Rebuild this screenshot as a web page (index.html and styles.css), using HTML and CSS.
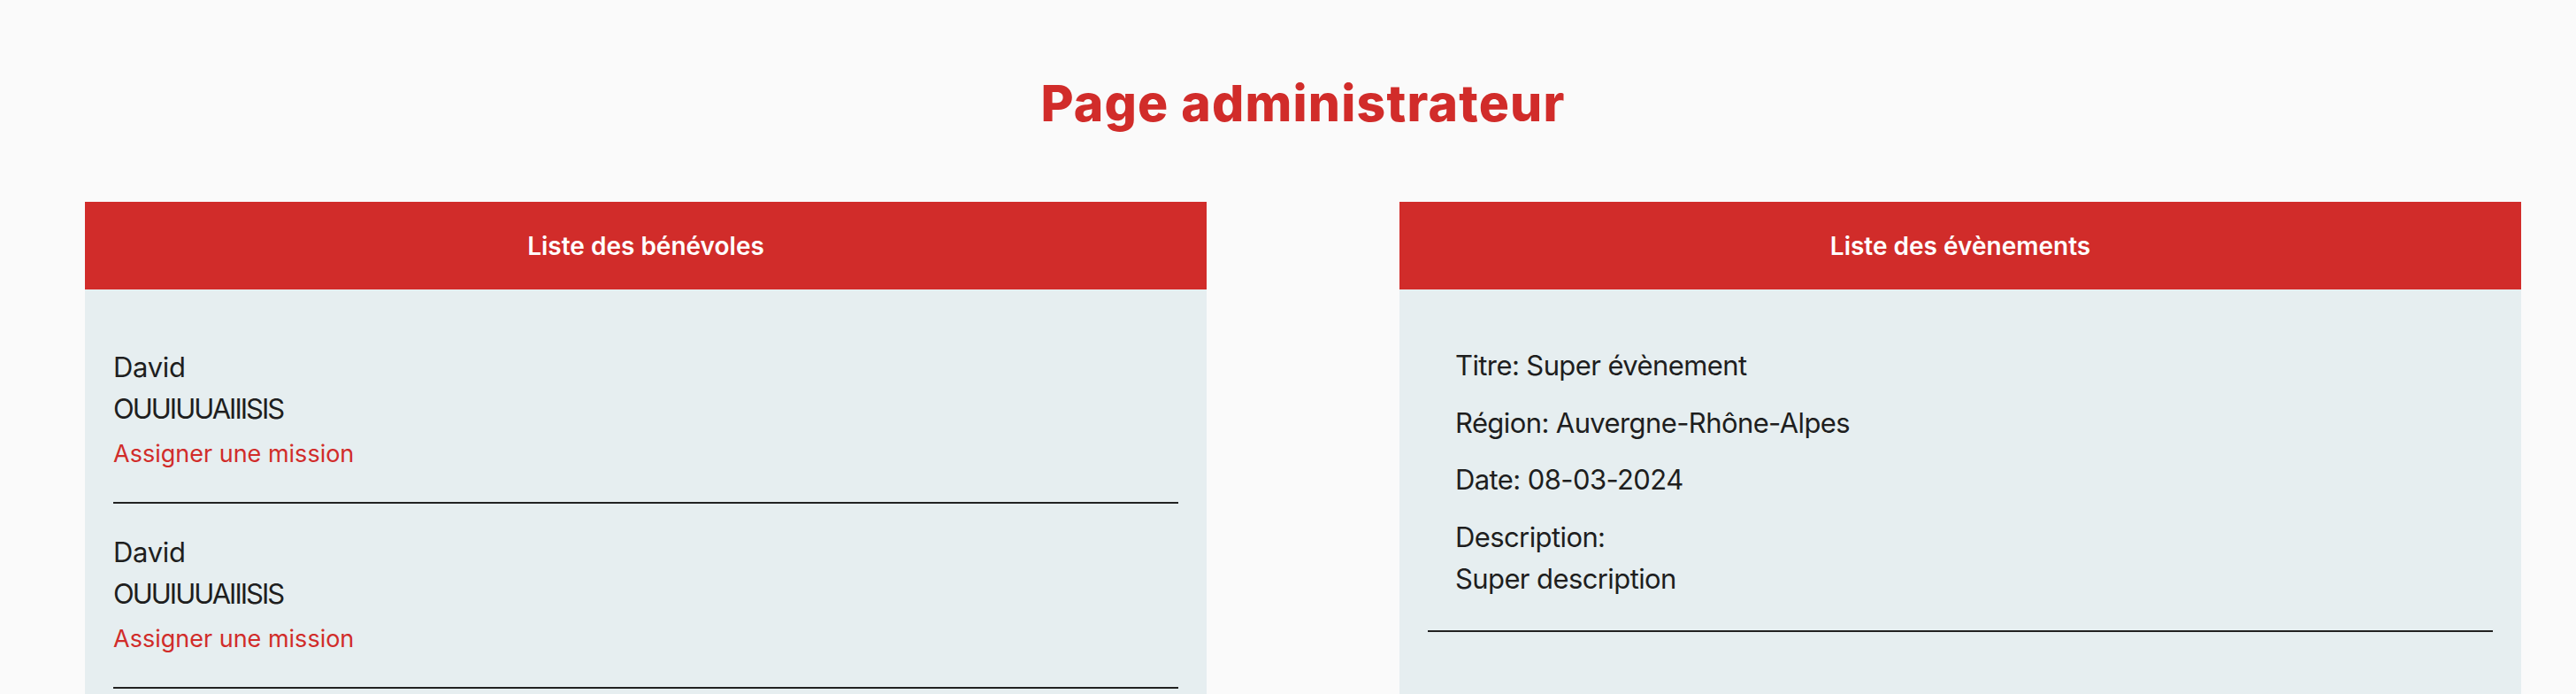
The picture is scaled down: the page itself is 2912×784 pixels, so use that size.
FILE: index.html
```html
<!DOCTYPE html>
<html lang="fr">
<head>
<meta charset="utf-8">
<title>Page administrateur</title>
<link rel="stylesheet" href="styles.css">
</head>
<body>
<main class="page">
  <h1 class="page-title">Page administrateur</h1>
  <div class="panels">
    <section class="panel">
      <header class="panel-head">Liste des bénévoles</header>
      <div class="panel-body">
        <div class="volunteer">
          <p class="line">David</p>
          <p class="line caps">OUUIUUAIIISIS</p>
          <a class="assign" href="#">Assigner une mission</a>
          <div class="divider"></div>
        </div>
        <div class="volunteer">
          <p class="line">David</p>
          <p class="line caps">OUUIUUAIIISIS</p>
          <a class="assign" href="#">Assigner une mission</a>
          <div class="divider"></div>
        </div>
      </div>
    </section>
    <section class="panel">
      <header class="panel-head">Liste des évènements</header>
      <div class="panel-body">
        <div class="event">
          <div class="event-info">
            <p class="field">Titre: Super évènement</p>
            <p class="field">Région: Auvergne-Rhône-Alpes</p>
            <p class="field">Date: 08-03-2024</p>
            <p class="field">Description:<br>Super description</p>
          </div>
          <div class="divider"></div>
        </div>
      </div>
    </section>
  </div>
</main>
</body>
</html>
```

FILE: styles.css
```css
html {
  overflow: hidden;
}

body {
  margin: 0;
  background: #fafafa;
  font-family: Inter, "Open Sans", sans-serif;
  color: #1e1e1e;
}

.page {
  padding: 0 62px 0 96px;
}

.page-title {
  margin: 0;
  padding-top: 88px;
  font-size: 57px;
  line-height: 57px;
  font-weight: 800;
  color: #d12c2a;
  text-align: center;
  letter-spacing: 1.2px;
}

.panels {
  margin-top: 83px;
  display: grid;
  grid-template-columns: 1fr 1fr;
  column-gap: 218px;
}

.panel {
  display: flex;
  flex-direction: column;
}

.panel-head {
  height: 99px;
  background: #d12c2a;
  color: #ffffff;
  font-size: 28px;
  font-weight: 600;
  display: flex;
  align-items: center;
  justify-content: center;
}

.panel-body {
  flex: 1;
  background: #e6eef0;
  padding: 64px 32px 40px;
}

.line {
  margin: 0;
  font-size: 31px;
  line-height: 47px;
  letter-spacing: -0.3px;
}

.caps {
  letter-spacing: -2px;
}

.assign {
  display: block;
  margin-top: 8px;
  font-size: 27px;
  line-height: 40px;
  color: #d12c2a;
  text-decoration: none;
}

.divider {
  border-top: 2px solid #222222;
}

.volunteer .divider {
  margin: 34px 0 31px;
}

.event {
  margin-top: -2px;
}

.event-info {
  padding-left: 31px;
}

.field {
  margin: 0 0 17.5px;
  font-size: 31px;
  line-height: 47px;
  letter-spacing: -0.6px;
}

.field:last-child {
  margin-bottom: 0;
}

.event .divider {
  margin-top: 35px;
}
```
